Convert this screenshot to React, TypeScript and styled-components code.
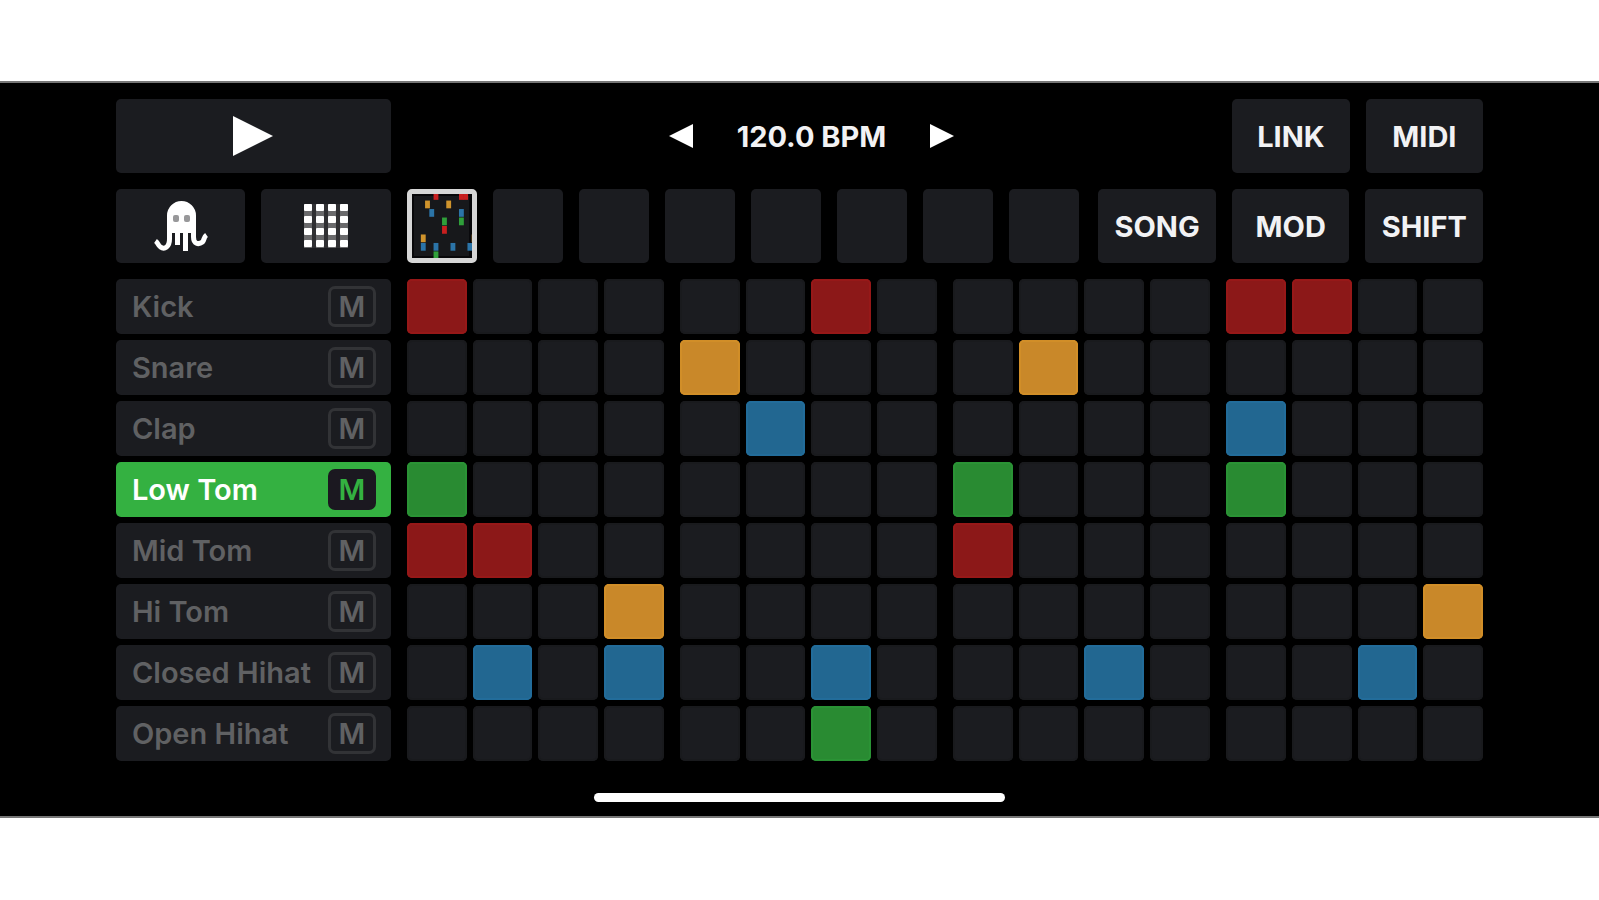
import React, { useState } from "react";
import styled, { createGlobalStyle } from "styled-components";

const GlobalStyle = createGlobalStyle`
  *, *::before, *::after { box-sizing: border-box; }
  body {
    margin: 0;
    background: #fff;
    font-family: Inter, "Liberation Sans", sans-serif;
  }
  button {
    margin: 0;
    padding: 0;
    border: 0;
    font: inherit;
    color: inherit;
    cursor: pointer;
  }
`;

type Tone = "red" | "orange" | "blue" | "green";

const tones: Record<Tone, { pad: string; edge: string; mark: string }> = {
  red: { pad: "#8c1818", edge: "#971818", mark: "#c81f1f" },
  orange: { pad: "#c98829", edge: "#d18e28", mark: "#d0942c" },
  blue: { pad: "#226791", edge: "#226c9a", mark: "#2b74a8" },
  green: { pad: "#298b32", edge: "#2a9335", mark: "#2f9f3a" },
};

interface Track {
  name: string;
  tone: Tone;
  steps: number[];
}

const tracks: Track[] = [
  { name: "Kick", tone: "red", steps: [0, 6, 12, 13] },
  { name: "Snare", tone: "orange", steps: [4, 9] },
  { name: "Clap", tone: "blue", steps: [5, 12] },
  { name: "Low Tom", tone: "green", steps: [0, 8, 12] },
  { name: "Mid Tom", tone: "red", steps: [0, 1, 8] },
  { name: "Hi Tom", tone: "orange", steps: [3, 15] },
  { name: "Closed Hihat", tone: "blue", steps: [1, 3, 6, 10, 14] },
  { name: "Open Hihat", tone: "green", steps: [6] },
];

const Page = styled.div`
  padding: 81px 0;
`;

const Device = styled.main`
  display: flex;
  flex-direction: column;
  gap: 16px;
  padding: 16px 7.25% 14px;
  background: #000;
  border: solid #777;
  border-width: 2px 0;
`;

const Row = styled.div`
  display: grid;
  grid-template-columns: minmax(0, 275fr) minmax(0, 1077fr);
  gap: 16px;
`;

const Surface = styled.button`
  display: flex;
  align-items: center;
  justify-content: center;
  min-width: 0;
  height: 74px;
  border-radius: 5px;
  background: #1b1c20;
  color: #f2f2f4;
  font-size: 29px;
  font-weight: 700;
`;

const Modes = styled.div`
  display: grid;
  grid-template-columns: 1fr 1fr;
  gap: 16px;
`;

const TopRight = styled.div`
  display: flex;
  gap: 16px;
`;

const Tempo = styled.div`
  display: flex;
  flex: 810;
  align-items: center;
  justify-content: center;
  gap: 44px;
  color: #f2f2f4;
  font-size: 29px;
  font-weight: 700;
`;

const TempoButton = styled.button`
  display: flex;
  background: none;
`;

const Actions = styled.div<{ $count: number }>`
  display: grid;
  flex: ${(p) => (p.$count === 2 ? 251 : 385)};
  grid-template-columns: repeat(${(p) => p.$count}, minmax(0, 1fr));
  gap: 16px;
`;

const PatternRow = styled.div`
  display: flex;
  gap: 19px;
`;

const Patterns = styled.div`
  display: grid;
  flex: 673;
  grid-template-columns: repeat(8, minmax(0, 1fr));
  gap: 16px;
`;

const PatternSlot = styled(Surface)<{ $active: boolean }>`
  overflow: hidden;
  border: ${(p) => (p.$active ? "5px solid #d6d6d6" : "0")};
  background: ${(p) => (p.$active ? "#08080a" : "#1b1c20")};
`;

const Sequencer = styled.div`
  display: flex;
  flex-direction: column;
  gap: 6px;
`;

const TrackHead = styled.div<{ $active: boolean }>`
  display: flex;
  align-items: center;
  height: 55px;
  padding: 0 15px 0 16px;
  border-radius: 5px;
  background: ${(p) => (p.$active ? "#34b141" : "#1b1c20")};
`;

const TrackName = styled.button<{ $active: boolean }>`
  flex: 1;
  min-width: 0;
  background: none;
  color: ${(p) => (p.$active ? "#fff" : "#606163")};
  font-size: 29px;
  font-weight: 600;
  line-height: 32px;
  text-align: left;
  white-space: nowrap;
`;

const Mute = styled.button<{ $active: boolean }>`
  display: flex;
  align-items: center;
  justify-content: center;
  width: 48px;
  height: 41px;
  border: 3px solid ${(p) => (p.$active ? "#1b1820" : "#323336")};
  border-radius: 7px;
  background: ${(p) => (p.$active ? "#1b1820" : "none")};
  color: ${(p) => (p.$active ? "#34b141" : "#606163")};
  font-size: 29px;
  font-weight: 600;
`;

const Steps = styled.div`
  display: grid;
  grid-template-columns: repeat(4, minmax(0, 1fr));
  gap: 16px;
`;

const Beat = styled.div`
  display: grid;
  grid-template-columns: repeat(4, minmax(0, 1fr));
  gap: 6px;
`;

const Pad = styled.button<{ $tone?: Tone }>`
  height: 55px;
  border-radius: 5px;
  background: ${(p) => (p.$tone ? tones[p.$tone].pad : "#1b1c20")};
  box-shadow: inset 0 0 0 2px ${(p) => (p.$tone ? tones[p.$tone].edge : "#191a1d")};
`;

const HomeBar = styled.div`
  align-self: center;
  width: 30%;
  height: 9px;
  margin-top: 16px;
  border-radius: 5px;
  background: #fff;
`;

function Triangle({ size, left }: { size: number; left?: boolean }) {
  return (
    <svg width={size} height={size} viewBox="0 0 40 40" aria-hidden="true">
      <path d={left ? "M40 0v40L0 20z" : "M0 0v40l40-20z"} fill="#fff" />
    </svg>
  );
}

function OctopusIcon() {
  return (
    <svg width="54" height="52" viewBox="0 0 54 52" aria-hidden="true">
      <path d="M13 33V15.500a14.500 14.500 0 0 1 29 0V33z" fill="#fff" />
      <g fill="none" stroke="#fff" strokeWidth="5">
        <path d="M15.500 30v9c0 8-5 11-9 8-3-2-2-4-5-6" />
        <path d="M39.500 30v7c0 7 5 8 9 5 2-2 1-5 4-7" />
        <path d="M23.500 30v15M31.500 30v21" />
      </g>
      <g fill="#98989a">
        <rect x="19" y="15" width="6" height="7" rx="2" />
        <rect x="30" y="15" width="6" height="7" rx="2" />
      </g>
    </svg>
  );
}

function GridIcon() {
  const at = [0, 12, 24, 36];
  return (
    <svg width="46" height="46" viewBox="0 0 46 46" aria-hidden="true">
      <rect x="1" y="1" width="44" height="44" fill="#303033" />
      {at.map((x) => (
        <rect key={x} x={x + 1} y="1" width="8" height="44" fill="#6a6a6c" />
      ))}
      {at.map((y) =>
        at.map((x) => (
          <rect key={`${x}-${y}`} x={x + 1} y={y + 1} width="8" height="7" rx="1" fill="#fff" />
        ))
      )}
    </svg>
  );
}

function PatternPreview() {
  return (
    <svg width="62" height="66" viewBox="4 2 62 66" aria-hidden="true">
      <rect x="6" y="4" width="57" height="62" fill="#17181b" />
      {tracks.map((track, row) =>
        track.steps
          .filter((step) => step > 1)
          .map((step) => (
            <rect
              key={`${row}-${step}`}
              x={step * 4.375}
              y={row * 8.750}
              width="5"
              height="8"
              fill={tones[track.tone].mark}
            />
          ))
      )}
    </svg>
  );
}

export default function App() {
  const [selected, setSelected] = useState(3);
  const [pattern, setPattern] = useState(0);

  return (
    <>
      <GlobalStyle />
      <Page>
        <Device>
          <Row>
            <Surface aria-label="Play">
              <Triangle size={40} />
            </Surface>
            <TopRight>
              <Tempo>
                <TempoButton aria-label="Slower">
                  <Triangle size={24} left />
                </TempoButton>
                <span>120.0 BPM</span>
                <TempoButton aria-label="Faster">
                  <Triangle size={24} />
                </TempoButton>
              </Tempo>
              <Actions $count={2}>
                <Surface>LINK</Surface>
                <Surface>MIDI</Surface>
              </Actions>
            </TopRight>
          </Row>
          <Row>
            <Modes>
              <Surface aria-label="Instrument">
                <OctopusIcon />
              </Surface>
              <Surface aria-label="Pattern grid">
                <GridIcon />
              </Surface>
            </Modes>
            <PatternRow>
              <Patterns>
                {Array.from({ length: 8 }, (_, i) => (
                  <PatternSlot
                    key={i}
                    $active={i === pattern}
                    aria-label={`Pattern ${i + 1}`}
                    onClick={() => setPattern(i)}
                  >
                    {i === 0 && <PatternPreview />}
                  </PatternSlot>
                ))}
              </Patterns>
              <Actions $count={3}>
                <Surface>SONG</Surface>
                <Surface>MOD</Surface>
                <Surface>SHIFT</Surface>
              </Actions>
            </PatternRow>
          </Row>
          <Sequencer>
            {tracks.map((track, row) => (
              <Row key={track.name}>
                <TrackHead $active={row === selected}>
                  <TrackName $active={row === selected} onClick={() => setSelected(row)}>
                    {track.name}
                  </TrackName>
                  <Mute $active={row === selected} aria-label={`Mute ${track.name}`}>
                    M
                  </Mute>
                </TrackHead>
                <Steps>
                  {[0, 4, 8, 12].map((start) => (
                    <Beat key={start}>
                      {[0, 1, 2, 3].map((offset) => {
                        const step = start + offset;
                        return (
                          <Pad
                            key={step}
                            $tone={track.steps.includes(step) ? track.tone : undefined}
                            aria-label={`${track.name} step ${step + 1}`}
                          />
                        );
                      })}
                    </Beat>
                  ))}
                </Steps>
              </Row>
            ))}
          </Sequencer>
          <HomeBar />
        </Device>
      </Page>
    </>
  );
}
